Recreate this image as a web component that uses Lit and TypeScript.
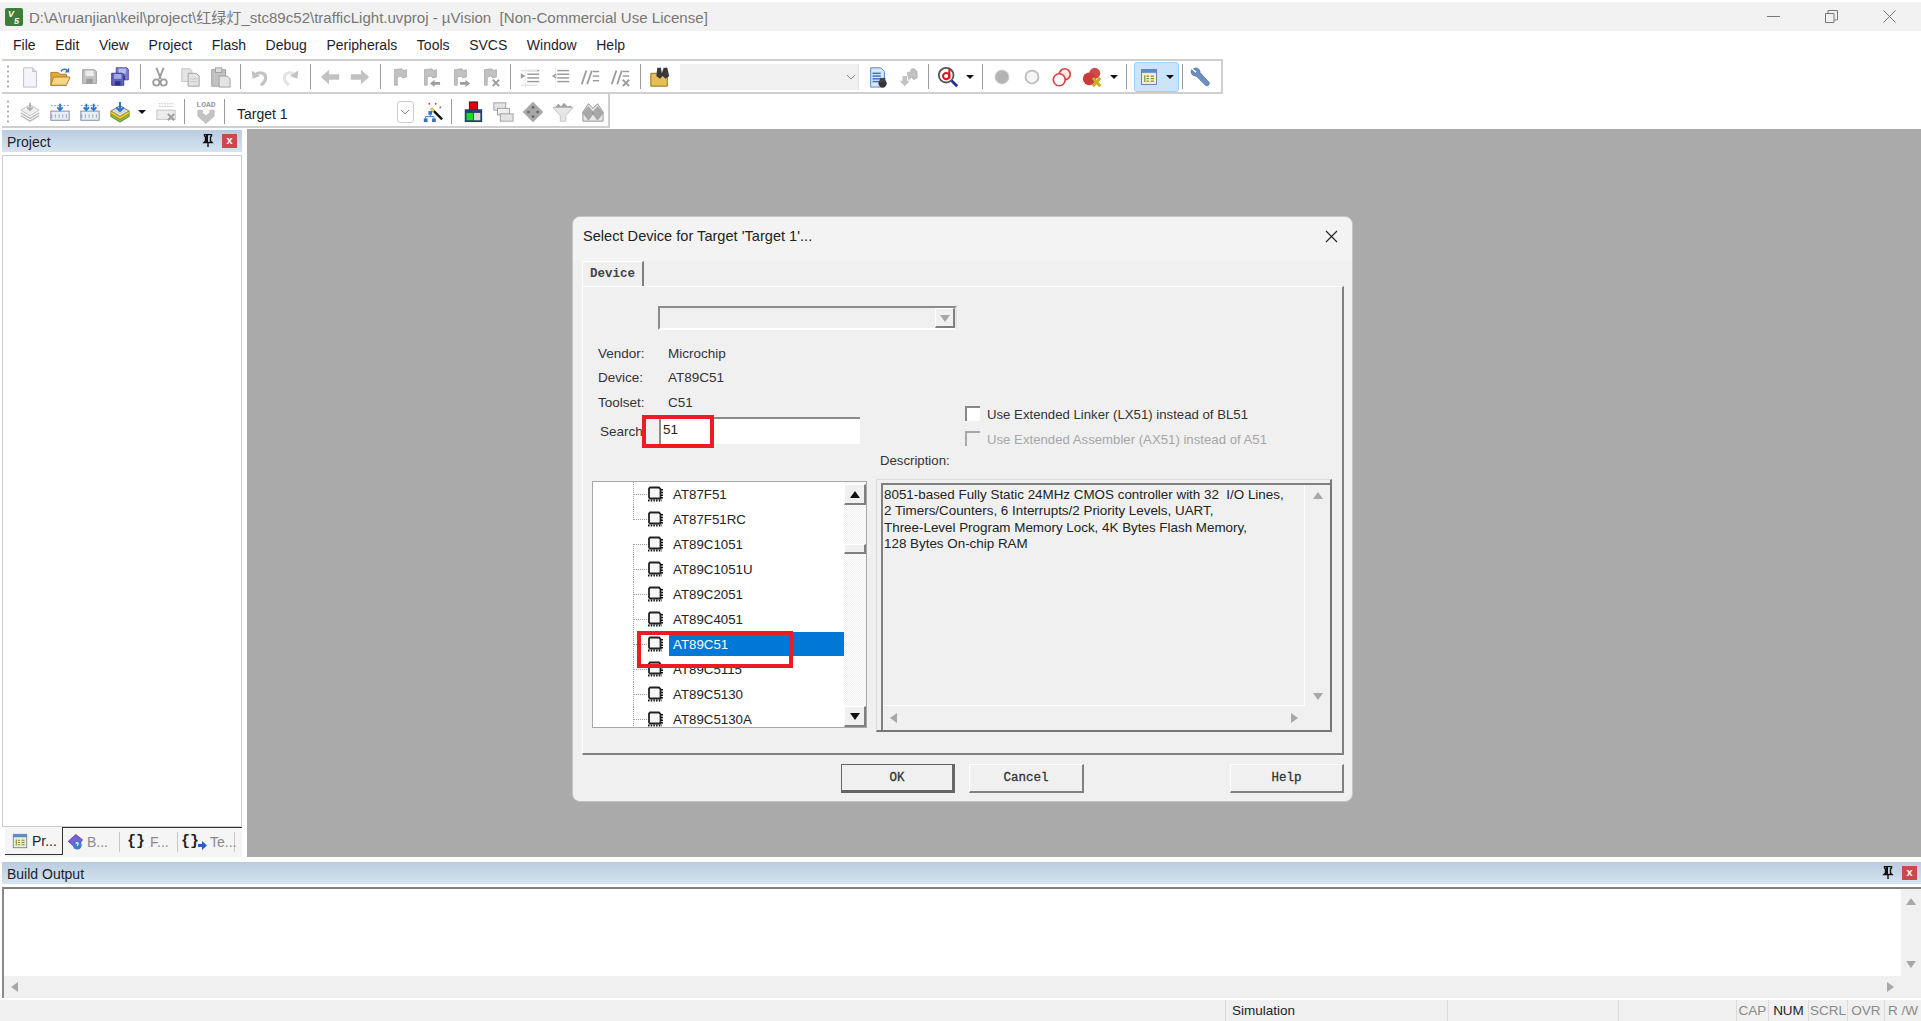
import { LitElement, html, css, svg } from "lit";
import { customElement } from "lit/decorators.js";

const ic = (c: unknown, cls = "") => html`<svg class="i ${cls}" viewBox="0 0 24 24">${c}</svg>`;
const G = "#c2c2c2", GD = "#9c9c9c", GL = "#e4e4e4";

const floppy = (f: string, d: string, l: string, dx = 0, dy = 0, s = 17) => svg`<g transform="translate(${dx} ${dy}) scale(${s / 17})"><path d="M1 1h13l2 2v13H1z" fill="${f}" stroke="${d}"/><rect x="4" y="2" width="9" height="6" fill="${l}"/><rect x="5" y="11" width="7" height="5" fill="${d}"/></g>`;
const flag = (extra: unknown = "") => svg`<path d="M6 4l8-1 2 2 3-1v8l-4 1-2-2-4 1v9H6z" fill="${G}" stroke="${GD}" stroke-width=".7"/>${extra}`;
const lines = (x: number, ys: number[], w: number, c = GD) => ys.map((y) => svg`<path d="M${x} ${y}h${w}" stroke="${c}" stroke-width="1.6"/>`);
const chipBoard = (c = "#3f6fb5") => svg`<rect x="2" y="11" width="20" height="10" fill="#e9edf4" stroke="#7d8796"/>${[4, 8, 12, 16, 20].map((x) => svg`<path d="M${x - 1} 15v4" stroke="${c}" stroke-width="1" stroke-dasharray="1 1"/>`)}<path d="M2 5h20" stroke="#8a93a3" stroke-dasharray="2 1.5"/>`;

const ICONS: Record<string, unknown> = {
  new: ic(svg`<path d="M5 2h10l4 4v17H5z" fill="#f3f5fb" stroke="#b9bdc8"/><path d="M15 2v4h4" fill="#dfe3ee" stroke="#b9bdc8"/>`),
  open: ic(svg`<path d="M2 7h8l2 2h7v12H2z" fill="#e0a93a" stroke="#a67a20"/><path d="M5 12h18l-4 9H2z" fill="#f6d68a" stroke="#a67a20"/><path d="M13 6c2-3 5-3 7-1" fill="none" stroke="#3d72b8" stroke-width="1.6"/><path d="M22 2v5h-5z" fill="#3d72b8"/>`),
  save: ic(floppy(G, GD, "#ececec", 3, 3)),
  saveall: ic(svg`${floppy("#7c80d0", "#3d3f93", "#b9bbe8", 7, 1, 15)}${floppy("#5f63bd", "#2f3185", "#a6a9e2", 2, 7, 15)}`),
  cut: ic(svg`<path d="M8 2l5 12M16 2l-5 12" stroke="${GD}" stroke-width="2"/><circle cx="8" cy="18" r="3.4" fill="none" stroke="${GD}" stroke-width="2"/><circle cx="16" cy="18" r="3.4" fill="none" stroke="${GD}" stroke-width="2"/>`),
  copy: ic(svg`<path d="M3 3h9l2 2v12H3z" fill="${GL}" stroke="${G}"/><path d="M10 8h9l3 3v11H10z" fill="${GL}" stroke="${GD}"/><path d="M12 14h8M12 17h8" stroke="${G}"/>`),
  paste: ic(svg`<rect x="3" y="4" width="15" height="18" fill="${G}" stroke="${GD}"/><rect x="7" y="2" width="7" height="5" fill="#ddd" stroke="${GD}"/><path d="M11 11h9l3 3v9H11z" fill="${GL}" stroke="${GD}"/>`),
  undo: ic(svg`<path d="M6 11c4-6 13-4 12 3-.4 3-2 5-5 7" fill="none" stroke="${G}" stroke-width="3.4"/><path d="M3 5l1 9 8-3z" fill="${G}"/>`),
  redo: ic(svg`<path d="M18 11c-4-6-13-4-12 3 .4 3 2 5 5 7" fill="none" stroke="${GL}" stroke-width="3.4"/><path d="M21 5l-1 9-8-3z" fill="${G}"/>`),
  back: ic(svg`<path d="M2 12l9-8v5h11v6H11v5z" fill="${G}"/>`),
  fwd: ic(svg`<path d="M22 12l-9-8v5H2v6h11v5z" fill="${G}"/>`),
  flag: ic(flag()),
  flagl: ic(flag(svg`<path d="M12 19l5-4v2.500h6v3h-6V23z" fill="${GD}"/>`)),
  flagr: ic(flag(svg`<path d="M23 19l-5-4v2.500h-6v3h6V23z" fill="${GD}"/>`)),
  flagx: ic(flag(svg`<path d="M15 15l7 7M22 15l-7 7" stroke="${GD}" stroke-width="2"/>`)),
  ind: ic(svg`${lines(9, [5, 9, 13, 17], 13)}${lines(2, [5, 21], 18, GL)}<path d="M2 8l5 3-5 3z" fill="${GD}"/><path d="M7 2v21" stroke="${GL}" stroke-dasharray="2 2"/>`),
  out: ic(svg`${lines(9, [5, 9, 13, 17], 13)}<path d="M8 8l-5 3 5 3z" fill="${GD}"/><path d="M7 2v21" stroke="${GL}" stroke-dasharray="2 2"/>`),
  cm: ic(svg`<path d="M3 20l5-15M9 20l5-15" stroke="${GD}" stroke-width="2"/>${lines(15, [6, 11, 16], 7)}`),
  cmx: ic(svg`<path d="M3 20l5-15M9 20l5-15" stroke="${GD}" stroke-width="2"/>${lines(15, [6, 11], 7)}<path d="M15 15l7 7M22 15l-7 7" stroke="${GD}" stroke-width="2"/>`),
  find: ic(svg`<path d="M2 8h8l2 2h8v12H2z" fill="#e7bf55" stroke="#8a6a1c"/><path d="M9 2h4l1 6 2-6h4l2 9-4 3-3-3-3 3-4-3z" fill="#3a3a3a"/>`),
  doc: ic(svg`<path d="M4 2h11l4 4v17H4z" fill="#dbe6f6" stroke="#4a7dc0"/>${lines(6, [8, 11, 14, 17], 9, "#3d73bd")}<circle cx="17" cy="19" r="4.500" fill="#333"/><path d="M14 13h6v5h-6z" fill="#444"/>`),
  dl: ic(svg`<path d="M11 7h3l2-4h3l3 3v7l-4 2-2-3-3 3z" fill="${G}" stroke="${GD}" stroke-width=".5"/><path d="M6 11h5v5h3l-5.500 6L3 16h3z" fill="${G}"/>`),
  dbg: ic(svg`<circle cx="10" cy="10" r="8" fill="#fff" stroke="#555" stroke-width="2"/><path d="M16 16l6 6" stroke="#1c2f9c" stroke-width="3"/><circle cx="10" cy="11" r="3.400" fill="none" stroke="#e8101c" stroke-width="2.200"/><path d="M13.500 3v11" stroke="#e8101c" stroke-width="2.200"/>`),
  bp: ic(svg`<circle cx="12" cy="12" r="7.500" fill="#b4b4b4" stroke="#c8c8c8"/>`),
  bpo: ic(svg`<circle cx="12" cy="12" r="7" fill="#f6f6f6" stroke="#bdbdbd" stroke-width="2"/>`),
  bps: ic(svg`<circle cx="15" cy="9" r="6" fill="#fbe8e8" stroke="#d8403e" stroke-width="1.800"/><circle cx="9" cy="15" r="6.500" fill="#fff" stroke="#d8403e" stroke-width="1.800"/>`),
  bpx: ic(svg`<circle cx="15" cy="8" r="6" fill="#d24b49"/><circle cx="9" cy="14" r="7" fill="#c93c3a"/><path d="M13 13l8 9M21 13l-8 9" stroke="#c7b01e" stroke-width="3.200"/>`),
  win: ic(svg`<rect x="3" y="3" width="18" height="18" fill="#f1efc8" stroke="#5470a8"/><rect x="3" y="3" width="18" height="4" fill="#5a8ad0"/><path d="M7 10v8M9 11h3M9 14h3M9 17h3M14 11h4M14 14h4M14 17h4" stroke="#6f7a1a" stroke-width="1.200"/>`),
  wrench: ic(svg`<path d="M5 3c3-2 7 0 7 4l10 11c1 2-2 5-4 3L8 11C4 11 1 8 3 4l4 4 2-2z" fill="#6d8fc2" stroke="#3d5c93" stroke-width=".7"/>`),
  stack: ic(svg`<path d="M12 4l10 6-10 6L2 10z" fill="#f0f0f0" stroke="#bdbdbd"/><path d="M2 13l10 6 10-6M2 16l10 6 10-6" fill="none" stroke="#bdbdbd" stroke-width="1.600"/><path d="M12 2v8M9 7l3 3 3-3" fill="none" stroke="#b0b0b0" stroke-width="2"/>`),
  t1: ic(svg`${chipBoard()}<path d="M12 3v7M9 7l3 3 3-3" fill="none" stroke="#2f7ad0" stroke-width="2"/>`),
  t2: ic(svg`${chipBoard()}<path d="M8 3v7M5 7l3 3 3-3M16 3v7M13 7l3 3 3-3" fill="none" stroke="#2f7ad0" stroke-width="2"/>`),
  batch: ic(svg`<path d="M12 5l10 6-10 6L2 11z" fill="#d8d8d8" stroke="#777"/><path d="M2 14l10 6 10-6v3l-10 6L2 17z" fill="#86b843" stroke="#5d8a25"/><path d="M2 11l10 6 10-6v3l-10 6-10-6z" fill="#e8cf3a" stroke="#a9941a"/><path d="M12 1v9M8 7l4 4 4-4" fill="none" stroke="#2d74cc" stroke-width="2.200"/>`),
  stop: ic(svg`<rect x="2" y="10" width="20" height="10" fill="#ececec" stroke="${G}"/><path d="M4 3h16M4 6h16" stroke="${G}" stroke-dasharray="2 1"/><path d="M14 14l7 7M21 14l-7 7" stroke="${GD}" stroke-width="2"/>`),
  load: ic(svg`<text class="lt" x="12" y="7" text-anchor="middle">LOAD</text><path d="M4 10h5v3l3 2 3-2v-3h5v6l-8 7-8-7z" fill="${G}"/>`, "big"),
  wand: ic(svg`<path d="M10 8l12 12" stroke="#111" stroke-width="2.600"/><path d="M10 8l3 3" stroke="#e6d44a" stroke-width="2.600"/><circle cx="8" cy="3" r="1" fill="#d84040"/><circle cx="15" cy="3" r="1" fill="#d84040"/><circle cx="20" cy="7" r="1" fill="#d84040"/><rect x="7" y="11" width="4" height="4" fill="#2f6fc6"/><rect x="2" y="19" width="4" height="4" fill="#2f6fc6"/><rect x="11" y="19" width="4" height="4" fill="#2f6fc6"/><path d="M4 19v-2h9v2M9 15v2" fill="none" stroke="#2f6fc6"/>`),
  blocks: ic(svg`<rect x="8" y="1" width="9" height="10" fill="#e00000" stroke="#222"/><rect x="3" y="9" width="19" height="14" fill="#27406e"/><rect x="5" y="13" width="7" height="8" fill="#12dd20"/><rect x="13" y="13" width="7" height="8" fill="#d8d8d8"/>`),
  wins: ic(svg`<rect x="2" y="2" width="13" height="8" fill="#e4e4e4" stroke="${GD}"/><rect x="6" y="8" width="13" height="7" fill="#eee" stroke="${GD}"/><rect x="9" y="14" width="14" height="8" fill="#e4e4e4" stroke="${GD}"/>`),
  dia: ic(svg`<path d="M12 1l11 11-11 11L1 12z" fill="#a8a8a8" stroke="#bbb"/><circle cx="12" cy="7" r="1.500" fill="#666"/><circle cx="7" cy="12" r="1.500" fill="#666"/><circle cx="17" cy="12" r="1.500" fill="#666"/><circle cx="12" cy="17" r="1.500" fill="#666"/>`),
  funnel: ic(svg`<path d="M1 7h22l-8 9v6H9v-6z" fill="#e6e6e6" stroke="${G}"/><path d="M3 7l4-4 3 3 3-4 4 4 3-1 2 2z" fill="#a2a2a2"/>`),
  dias: ic(svg`<path d="M7 3l5 5 5-5 6 9v10H1V12z" fill="#e8e8e8" stroke="#8c8c8c"/><path d="M7 6l6 7-6 8-6-8zM17 6l6 7-6 8-6-8z" fill="#a8a8a8" stroke="#8c8c8c" stroke-width=".5"/>`),
};
const PIN = svg`<path d="M2.500 .5h7v1.500l-1 1v4l1.500 1.500h-8L3.500 7V3l-1-1zM6 8v5" fill="none" stroke="#111" stroke-width="1.400"/><rect x="4" y="1" width="2" height="7" fill="#111"/>`;
const CHIP = svg`<path d="M3 1.500h9l1.500 1.500v9.500H3l-1-1V2.500z" fill="#f6f6f6" stroke="#222" stroke-width="1.800"/><path d="M1 14.500h14" stroke="#111" stroke-width="2.200" stroke-dasharray="1.500 1.200"/><path d="M15 3v10" stroke="#111" stroke-width="2" stroke-dasharray="1.500 1.200"/>`;

const tri = (d: string, c = "#a8a8a8") => html`<svg class="tri" viewBox="0 0 12 12"><path d="${d}" fill="${c}"/></svg>`;
const UP = "M1 10L6 3l5 7z", DOWN = "M1 3l5 7 5-7z", LEFT = "M9 1L2 6l7 5z", RIGHT = "M3 1l7 5-7 5z";
const chev = html`<svg class="chev" viewBox="0 0 12 8"><path d="M2 2l4 4 4-4" fill="none" stroke="#888" stroke-width="1"/></svg>`;

const DEVICES = ["AT87F51", "AT87F51RC", "AT89C1051", "AT89C1051U", "AT89C2051", "AT89C4051", "AT89C51", "AT89C5115", "AT89C5130", "AT89C5130A"];
const MENU = ["File", "Edit", "View", "Project", "Flash", "Debug", "Peripherals", "Tools", "SVCS", "Window", "Help"];

@customElement("app-root")
export class AppRoot extends LitElement {
  static styles = css`
    :host { display: flex; flex-direction: column; height: 100vh; overflow: hidden; background: #fff; font-family: "Liberation Sans", "Noto Sans CJK SC", sans-serif; font-size: 14px; color: #222; }
    * { box-sizing: border-box; }
    svg { display: block; flex: none; }
    .title { margin-top: 2px; height: 29px; flex: none; background: #f2f2f2; display: flex; align-items: center; padding-left: 5px; color: #777; font-size: 15.050px; white-space: pre; }
    .appicon { width: 18px; height: 18px; margin-right: 6px; }
    .appicon text { font: italic bold 9px "Liberation Sans", sans-serif; fill: #fff; }
    .title .text { flex: 1; }
    .wc { display: flex; width: 199px; padding-right: 25px; }
    .wc svg { width: 13px; height: 13px; margin-left: 45px; }
    .menu { height: 27px; flex: none; display: flex; align-items: center; gap: 19.6px; padding-left: 13px; color: #1d1d2b; }
    .tb { flex: none; align-self: flex-start; display: flex; align-items: center; margin-left: 2px; background: #fff; border-style: solid; border-color: #cfcfcf; border-width: 2px 2px 2px 0; }
    .tb1 { margin-top: 1px; width: 1221px; height: 35px; }
    .tb2 { width: 608px; height: 34px; margin-bottom: 1px; border-top: 0; padding-top: 3px; }
    .grip { width: 13px; height: 26px; flex: none; margin-right: 0; background: radial-gradient(circle, #aaa 1px, transparent 1.200px) 3px 0 / 6px 5px repeat-y; }
    .b { width: 30px; height: 26px; flex: none; display: flex; align-items: center; justify-content: center; }
    .i { width: 22px; height: 22px; }
    .i.big { width: 26px; height: 26px; }
    .lt { font: bold 7.500px "Liberation Mono", monospace; fill: #9c9c9c; }
    .sep { width: 1px; height: 25px; margin: 0 4.500px; background: #9a9a9a; flex: none; }
    .sep.n { margin: 0 2.500px; }
    .arr { width: 14px; flex: none; display: flex; justify-content: center; }
    .arr::after { content: ""; border: 4px solid transparent; border-top: 4px solid #111; border-bottom: 0; }
    .fcombo { width: 179px; height: 26px; margin: 0 4px 0 5px; background: #f0f0f0; border-right: 1px solid #e2e2e2; display: flex; align-items: center; justify-content: flex-end; flex: none; }
    .chev { width: 12px; height: 8px; margin-right: 1px; }
    .active { margin-left: 3px; width: 45px; height: 30px; background: #cce4fb; border: 1px solid #99d1ff; border-radius: 3px; display: flex; align-items: center; flex: none; padding-left: 4px; }
    .active .i { width: 20px; height: 20px; }
    .active .arr { margin-left: 4px; }
    .tgt { width: 170px; padding: 4px 0 0 10px; flex: none; color: #1d1d2b; }
    .cb { width: 17px; height: 22px; border: 1px solid #ccc; border-radius: 3px; flex: none; display: flex; align-items: center; justify-content: center; }

    .main { height: 728px; flex: none; display: flex; }
    .left { width: 247px; flex: none; display: flex; flex-direction: column; padding: 1px 5px 0 2px; }
    .ph { height: 22px; flex: none; display: flex; align-items: center; padding: 0 5px; background: linear-gradient(#b9ccde, #d6e4f0); color: #1d1d2b; }
    .ph .name { flex: 1; padding-top: 2px; }
    .pin { width: 12px; height: 14px; margin-right: 8px; }
    .x { width: 15px; height: 14px; background: #c9494c; color: #fff; font: bold 11px/13px "Liberation Sans", sans-serif; text-align: center; }
    .pbody { flex: 1; margin-top: 3px; border: 1px solid #cdcdcd; background: #fff; }
    .tabs { height: 30px; flex: none; margin-left: 3px; display: flex; background: #f5f5f5; }
    .tab0 { width: 58px; height: 28px; border-right: 1px solid #333; border-bottom: 1px solid #333; display: flex; align-items: center; padding-left: 6px; gap: 3px; color: #1d1d2b; }
    .trest { flex: 1; height: 28px; border-top: 1px solid #333; display: flex; align-items: center; color: #8a8a8a; }
    .t { height: 100%; display: flex; align-items: center; border-right: 1px solid #c8c8c8; height: 20px; padding-left: 3px; gap: 3px; flex: none; }
    .t .i { width: 18px; height: 18px; }
    .tab0 .i { width: 18px; height: 18px; }
    .brace { font: bold 15px "Liberation Mono", monospace; color: #222; }

    .canvas { flex: 1; position: relative; background: #aaaaaa; }
    .dlg { position: absolute; left: 325px; top: 87px; width: 781px; height: 586px; background: #f0f0f0; border-radius: 8px; border: 1px solid #c4c4c4; padding: 0 8px 0 9px; display: flex; flex-direction: column; }
    .dtitle { height: 44px; flex: none; margin: 0 -8px 0 -9px; padding: 0 14px 6px 10px; display: flex; align-items: center; justify-content: space-between; font-size: 14.600px; background: #f3f3f3; color: #222; border-radius: 8px 8px 0 0; }
    .dtitle svg { width: 13px; height: 13px; }
    .tabrow { height: 26px; flex: none; display: flex; }
    .dtab { width: 62px; height: 26px; border-top: 1px solid #fff; border-left: 1px solid #fff; border-right: 2px solid #808080; padding-left: 7px; font: bold 12.500px/24px "Liberation Mono", monospace; color: #444; }
    .panel { width: 762px; height: 469px; flex: none; margin-top: -1px; border-top: 1px solid #fff; border-left: 1px solid #fff; border-right: 2px solid #808080; border-bottom: 2px solid #808080; display: grid; grid-template-columns: 293px 1fr; font-size: 13.500px; }
    .lc { padding-top: 19px; display: flex; flex-direction: column; }
    .combo { width: 299px; height: 24px; margin-left: 75px; flex: none; border: 2px solid #8c8c8c; border-right-color: #e4e4e4; border-bottom-color: #fff; display: flex; justify-content: flex-end; align-items: center; }
    .cbtn { width: 20px; height: 20px; border-right: 2px solid #808080; border-bottom: 2px solid #808080; border-left: 1px solid #fff; border-top: 1px solid #fff; display: flex; align-items: center; justify-content: center; }
    .tri { width: 12px; height: 12px; }
    .kv { height: 24.500px; flex: none; padding-left: 15px; display: flex; align-items: center; color: #333; }
    .kv span:first-child { width: 70px; }
    .kv.first { margin-top: 11px; }
    .search { position: relative; margin-top: 2px; height: 27px; flex: none; display: flex; align-items: center; padding-left: 17px; color: #333; }
    .search label { width: 59px; padding-top: 2px; }
    .sin { width: 201px; height: 27px; background: #fff; border-top: 2px solid #8c8c8c; border-left: 2px solid #8c8c8c; padding-left: 2px; line-height: 22px; color: #222; }
    .redbox { position: absolute; border: 4px solid #ed1c24; }
    .r1 { left: 59px; top: -2px; width: 72px; height: 33px; }
    .list { position: relative; margin: 37px 0 0 9px; width: 275px; height: 247px; flex: none; border: 1px solid #a8a8a8; background: #fff; display: flex; overflow: hidden; }
    .rows { flex: 1; }
    .row { height: 25px; display: flex; align-items: center; padding-left: 40px; font-size: 13.300px; color: #222; }
    .br { width: 14px; height: 25px; flex: none; border-left: 1px dotted #9a9a9a; align-self: flex-start; }
    .br::after { content: ""; display: block; height: 12px; border-bottom: 1px dotted #9a9a9a; }
    .br.end { height: 13px; }
    .br.start { height: 13px; margin-top: 12px; }
    .br.start::after { height: 0; }
    .chip { width: 16px; height: 16px; margin-right: 10px; }
    .lab { flex: 1; height: 24px; line-height: 26px; padding-left: 4px; margin-left: -4px; }
    .lab.sel { background: #0078d7; color: #fff; }
    .vs { width: 22px; flex: none; display: flex; flex-direction: column; padding-top: 2px; background: repeating-conic-gradient(#f0f0f0 0 25%, #fff 0 50%) 0 0 / 2px 2px; }
    .sb { width: 22px; height: 21px; flex: none; background: #f0f0f0; border-right: 2px solid #808080; border-bottom: 2px solid #808080; border-top: 1px solid #fff; border-left: 1px solid #fff; display: flex; align-items: center; justify-content: center; }
    .thumb { height: 10px; margin: 39px 0 auto; }
    .r2 { left: 44px; top: 149px; width: 156px; height: 37px; }
    .rc { padding-top: 119px; display: flex; flex-direction: column; }
    .chk { height: 15px; flex: none; display: flex; align-items: center; padding: 2px 0 0 89px; margin-bottom: 10px; white-space: nowrap; color: #333; font-size: 13.200px; }
    .chk .box { width: 15px; height: 15px; background: #fff; border-top: 2px solid #888; border-left: 2px solid #888; margin: -2px 7px 0 0; flex: none; }
    .chk.dis { color: #a6a6a6; }
    .chk.dis .box { background: #f0f0f0; border-color: #a8a8a8; }
    .dlabel { height: 16px; line-height: 16px; margin: -3px 0 0 4px; flex: none; color: #333; font-size: 13.200px; }
    .desc { margin-top: 10px; width: 456px; height: 253px; flex: none; border-top: 1px solid #dcdcdc; border-left: 1px solid #dcdcdc; border-right: 2px solid #777; border-bottom: 2px solid #777; padding: 3px 0 0 4px; }
    .dinner { height: 100%; border-top: 2px solid #808080; border-left: 2px solid #808080; display: grid; grid-template-columns: 1fr 25px; grid-template-rows: 1fr 24px; }
    .dtext { border-right: 1px solid #fff; border-bottom: 1px solid #fff; padding: 2px 0 0 1px; font-size: 13.400px; line-height: 16.300px; white-space: pre; color: #222; }
    .vbar { display: flex; flex-direction: column; justify-content: space-between; align-items: center; padding: 4px 0 4px; }
    .hbar { display: flex; justify-content: space-between; align-items: center; padding: 0 5px; }
    .dbtns { display: flex; margin-top: 9px; padding-left: 259px; gap: 14px; }
    .btn { width: 115px; height: 29px; flex: none; text-align: center; font: 12.500px/26px "Liberation Mono", monospace; -webkit-text-stroke: .3px #333; color: #333; border-top: 1px solid #fff; border-left: 1px solid #fff; border-right: 2px solid #808080; border-bottom: 2px solid #808080; }
    .btn.def { width: 114px; border: 1px solid #666; border-right: 3px solid #666; border-bottom: 3px solid #666; }
    .btn.help { margin-left: auto; width: 114px; }

    .gap { height: 5px; flex: none; }
    .build { flex: none; }
    .build .ph { margin-left: 2px; padding-right: 4px; }
    .bbox { margin: 3px 0 0 2px; height: 111px; border-top: 2px solid #808080; border-left: 2px solid #8a8a8a; display: grid; grid-template-columns: 1fr 20px; grid-template-rows: 87px 22px; background: #f0f0f0; }
    .bwhite { background: #fff; }
    .bv { display: flex; flex-direction: column; justify-content: space-between; align-items: center; padding: 6px 0 6px; }
    .bh { display: flex; justify-content: space-between; align-items: center; padding: 0 5px 0 5px; grid-column: 1 / 2; }
    .status { margin-top: 1px; height: 22px; flex: none; display: flex; background: #f0f0f0; border-top: 1px solid #fff; font-size: 13.500px; color: #8a8a8a; }
    .s { height: 100%; border-left: 1px solid #dcdcdc; display: flex; align-items: center; justify-content: center; flex: none; white-space: pre; }
    .s.on { color: #1d1d2b; }
    .s.sim { padding-left: 6px; justify-content: flex-start; color: #1d1d2b; }
  `;

  private b(n: string) {
    return html`<div class="b">${ICONS[n]}</div>`;
  }
  private seq(a: string[]) {
    return a.map((n) => this.b(n));
  }
  private row(d: string, i: number) {
    const cls = i === 1 ? "end" : i === 2 ? "start" : "";
    return html`<div class="row"><span class="br ${cls}"></span><svg class="chip" viewBox="0 0 16 16">${CHIP}</svg><div class="lab ${d === "AT89C51" ? "sel" : ""}">${d}</div></div>`;
  }
  private panelHead(name: string) {
    return html`<div class="ph"><span class="name">${name}</span><svg class="pin" viewBox="0 0 12 14">${PIN}</svg><div class="x">x</div></div>`;
  }

  render() {
    return html`
      <div class="title">
        <svg class="appicon" viewBox="0 0 18 18"><rect width="18" height="18" rx="2" fill="#3e7d3a"/><text x="3" y="9">V</text><text x="9" y="16">5</text></svg>
        <span class="text">D:\\A\\ruanjian\\keil\\project\\红绿灯_stc89c52\\trafficLight.uvproj - µVision  [Non-Commercial Use License]</span>
        <div class="wc">
          <svg viewBox="0 0 13 13"><path d="M0 6.500h13" stroke="#777"/></svg>
          <svg viewBox="0 0 13 13"><path d="M.5 3.500h8.500v9H.5zM3 3V.5h9.500V10H9.500" fill="none" stroke="#777"/></svg>
          <svg viewBox="0 0 13 13"><path d="M.5.5l12 12M12.500.5l-12 12" stroke="#777"/></svg>
        </div>
      </div>
      <div class="menu">${MENU.map((m) => html`<span>${m}</span>`)}</div>
      <div class="tb tb1">
        <div class="grip"></div>
        ${this.seq(["new", "open", "save", "saveall"])}<i class="sep"></i>
        ${this.seq(["cut", "copy", "paste"])}<i class="sep"></i>
        ${this.seq(["undo", "redo"])}<i class="sep"></i>
        ${this.seq(["back", "fwd"])}<i class="sep"></i>
        ${this.seq(["flag", "flagl", "flagr", "flagx"])}<i class="sep"></i>
        ${this.seq(["ind", "out", "cm", "cmx"])}<i class="sep"></i>
        ${this.b("find")}
        <div class="fcombo">${chev}</div>
        ${this.seq(["doc", "dl"])}<i class="sep"></i>
        ${this.b("dbg")}<span class="arr"></span><i class="sep"></i>
        ${this.seq(["bp", "bpo", "bps", "bpx"])}<span class="arr"></span><i class="sep"></i>
        <div class="active">${ICONS.win}<span class="arr"></span></div><i class="sep n"></i>
        ${this.b("wrench")}
      </div>
      <div class="tb tb2">
        <div class="grip"></div>
        ${this.seq(["stack", "t1", "t2", "batch"])}<span class="arr"></span>
        <span style="width:2px"></span>${this.b("stop")}<i class="sep n"></i>
        <span style="width:4px"></span>${this.b("load")}<i class="sep n"></i>
        <div class="tgt">Target 1</div>
        <div class="cb">${chev}</div>
        <span style="width:4px"></span>${this.b("wand")}<i class="sep n"></i>
        <span style="width:4px"></span>${this.seq(["blocks", "wins", "dia", "funnel", "dias"])}
      </div>
      <div class="main">
        <div class="left">
          ${this.panelHead("Project")}
          <div class="pbody"></div>
          <div class="tabs">
            <div class="tab0">${ICONS.win}<span>Pr...</span></div>
            <div class="trest">
              <div class="t" style="width:57px"><svg class="i" viewBox="0 0 24 24"><path d="M3 11L13 2l9 7-8 12z" fill="#7a5fd8" stroke="#4b38a8"/><circle cx="15" cy="16" r="6" fill="#3f7fd0"/><path d="M13 14c1-2 4-1 3 1l-1 2" fill="none" stroke="#fff" stroke-width="1.500"/></svg><span>B...</span></div>
              <div class="t" style="width:58px"><span class="brace" style="margin-left:4px">{}</span><span style="margin-left:2px">F...</span></div>
              <div class="t" style="width:57px"><span class="brace">{}</span><svg style="width:9px;height:9px;margin:8px 0 0 -4px" viewBox="0 0 9 9"><path d="M0 3h4V0l5 4.500L4 9V6H0z" fill="#2a5cc8"/></svg><span>Te...</span></div>
            </div>
          </div>
        </div>
        <div class="canvas">
          <div class="dlg">
            <div class="dtitle"><span>Select Device for Target 'Target 1'...</span><svg viewBox="0 0 13 13"><path d="M1 1l11 11M12 1L1 12" stroke="#222" stroke-width="1.100"/></svg></div>
            <div class="tabrow"><div class="dtab">Device</div></div>
            <div class="panel">
              <div class="lc">
                <div class="combo"><div class="cbtn">${tri(DOWN)}</div></div>
                <div class="kv first"><span>Vendor:</span><span>Microchip</span></div>
                <div class="kv"><span>Device:</span><span>AT89C51</span></div>
                <div class="kv"><span>Toolset:</span><span>C51</span></div>
                <div class="search"><label>Search</label><div class="sin">51</div><div class="redbox r1"></div></div>
                <div class="list">
                  <div class="rows">${DEVICES.map((d, i) => this.row(d, i))}</div>
                  <div class="vs">
                    <div class="sb">${tri(UP, "#111")}</div>
                    <div class="sb thumb"></div>
                    <div class="sb">${tri(DOWN, "#111")}</div>
                  </div>
                  <div class="redbox r2"></div>
                </div>
              </div>
              <div class="rc">
                <div class="chk"><span class="box"></span>Use Extended Linker (LX51) instead of BL51</div>
                <div class="chk dis"><span class="box"></span>Use Extended Assembler (AX51) instead of A51</div>
                <div class="dlabel">Description:</div>
                <div class="desc">
                  <div class="dinner">
                    <div class="dtext">8051-based Fully Static 24MHz CMOS controller with 32  I/O Lines,
2 Timers/Counters, 6 Interrupts/2 Priority Levels, UART,
Three-Level Program Memory Lock, 4K Bytes Flash Memory,
128 Bytes On-chip RAM</div>
                    <div class="vbar">${tri(UP)}${tri(DOWN)}</div>
                    <div class="hbar">${tri(LEFT)}${tri(RIGHT)}</div>
                    <div></div>
                  </div>
                </div>
              </div>
            </div>
            <div class="dbtns">
              <div class="btn def">OK</div>
              <div class="btn">Cancel</div>
              <div class="btn help">Help</div>
            </div>
          </div>
        </div>
      </div>
      <div class="gap"></div>
      <div class="build">
        ${this.panelHead("Build Output")}
        <div class="bbox">
          <div class="bwhite"></div>
          <div class="bv">${tri(UP)}${tri(DOWN)}</div>
          <div class="bh">${tri(LEFT)}${tri(RIGHT)}</div>
          <div></div>
        </div>
      </div>
      <div class="status">
        <div style="width:1225px;flex:none"></div>
        <div class="s sim" style="width:222px">Simulation</div>
        <div class="s" style="width:171px"></div>
        <div class="s" style="width:118px"></div>
        <div class="s" style="width:32px">CAP</div>
        <div class="s on" style="width:40px">NUM</div>
        <div class="s" style="width:39px">SCRL</div>
        <div class="s" style="width:37px">OVR</div>
        <div class="s" style="width:37px">R /W</div>
      </div>
    `;
  }
}
